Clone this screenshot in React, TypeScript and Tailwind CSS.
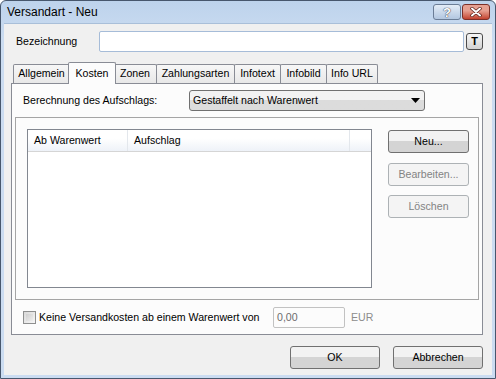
import React from 'react';

const font = "font-['Liberation_Sans',Arial,sans-serif]";

const btn =
  'flex items-center justify-center rounded-[3px] border border-[#707070] bg-gradient-to-b from-[#f2f2f2] from-50% to-[#d4d4d4] to-50% text-black';
const btnDisabled =
  'flex items-center justify-center rounded-[3px] border border-[#adb2b5] bg-[#f4f4f4] text-[#838383]';

const tabs = [
  { label: 'Allgemein', w: 'w-[57px]' },
  { label: 'Kosten', w: 'w-[48px]', active: true },
  { label: 'Zonen', w: 'w-[44px]' },
  { label: 'Zahlungsarten', w: 'w-[79px]' },
  { label: 'Infotext', w: 'w-[47px]' },
  { label: 'Infobild', w: 'w-[47px]' },
  { label: 'Info URL', w: 'w-[52px]' },
];

const TitleButtons = () => (
  <div className="flex items-start gap-[1px] pt-[3px] pr-[5px]">
    <div className="flex h-[16px] w-[28px] items-center justify-center rounded-[3px] border border-[#6b7d96] bg-gradient-to-b from-[#e4edf7] to-[#b3c7e0]">
      <span className="text-[13px] font-bold leading-none text-white [text-shadow:0_0_1px_#334,0_0_1px_#334]">?</span>
    </div>
    <div className="flex h-[16px] w-[28px] items-center justify-center rounded-[3px] border border-[#7b3028] bg-gradient-to-b from-[#e6a091] from-40% to-[#c2422f]">
      <svg width="12" height="10" viewBox="0 0 12 10">
        <path d="M2 1.5 L10 8.5 M10 1.5 L2 8.5" stroke="#5a1c14" strokeWidth="3.4" strokeLinecap="round" />
        <path d="M2 1.5 L10 8.5 M10 1.5 L2 8.5" stroke="#ffffff" strokeWidth="2" strokeLinecap="round" />
      </svg>
    </div>
  </div>
);

export default function App() {
  return (
    <div className={`${font} h-[379px] w-[496px] bg-white text-[10.6px] text-black`}>
      <div className="flex h-[379px] w-[496px] flex-col rounded-t-[6px] border border-[#47576d] bg-gradient-to-b from-[#bdd3ec] from-0% to-[#cbdcf1] to-10%">
        {/* title bar */}
        <div className="flex h-[22px] items-start justify-between">
          <span className="pl-[6px] pt-[4px] text-[12px] leading-[14px] text-black">Versandart - Neu</span>
          <TitleButtons />
        </div>

        {/* client */}
        <div className="mx-[3px] flex h-[352px] flex-col border-t border-[#a9bfd9] bg-[#f0f0f0]">
          <div className="mt-[7px] flex h-[21px] items-center">
            <span className="w-[95px] pl-[12px]">Bezeichnung</span>
            <div className="h-[21px] w-[365px] rounded-[2px] border border-[#a6bcd8] bg-white" />
            <div className="ml-[2px] flex h-[17px] w-[17px] items-center justify-center rounded-[3px] border border-[#4b4b4b] bg-gradient-to-b from-[#f6f6f6] to-[#d2d2d2] text-[11px] font-bold">
              T
            </div>
          </div>

          {/* tabs */}
          <div className="ml-[9px] mt-[10px] flex h-[21px] items-end">
            {tabs.map(t =>
              t.active ? (
                <div
                  key={t.label}
                  className={`${t.w} relative z-10 -mx-[2px] -mb-[1px] flex h-[22px] items-start justify-center rounded-t-[2px] border border-b-0 border-[#898c95] bg-[#fcfcfc] pt-[3px]`}
                >
                  {t.label}
                </div>
              ) : (
                <div
                  key={t.label}
                  className={`${t.w} -ml-[1px] flex h-[19px] items-center justify-center rounded-t-[2px] border border-b-0 border-[#898c95] bg-gradient-to-b from-[#f7f7f7] to-[#e8e8e8] first:ml-0`}
                >
                  {t.label}
                </div>
              )
            )}
          </div>

          {/* panel */}
          <div className="ml-[7px] flex h-[252px] w-[472px] flex-col border border-[#898c95] bg-[#fcfcfc]">
            <div className="mt-[6px] flex h-[21px] items-center">
              <span className="w-[177px] pl-[11px]">Berechnung des Aufschlags:</span>
              <div className="flex h-[21px] w-[236px] items-center justify-between rounded-[3px] border border-[#707070] bg-gradient-to-b from-[#f2f2f2] from-50% to-[#dcdcdc] to-50% pl-[3px] pr-[4px]">
                <span>Gestaffelt nach Warenwert</span>
                <svg width="9" height="5" viewBox="0 0 9 5">
                  <path d="M0 0 H9 L4.5 5 Z" fill="#000" />
                </svg>
              </div>
            </div>

            {/* group frame */}
            <div className="ml-[3px] mt-[6px] flex h-[183px] w-[464px] items-start border border-[#a5a5a5]">
              <div className="ml-[11px] mt-[11px] flex h-[159px] w-[345px] flex-col border border-[#828790] bg-white">
                <div className="flex h-[22px] border-b border-[#d5d5d5] bg-gradient-to-b from-white from-40% to-[#eef2f8]">
                  <div className="flex w-[100px] items-center border-r border-[#e3e7ec] pl-[6px]">Ab Warenwert</div>
                  <div className="flex w-[222px] items-center border-r border-[#e3e7ec] pl-[6px]">Aufschlag</div>
                  <div className="flex-1" />
                </div>
              </div>
              <div className="ml-[16px] mt-[12px] flex flex-col">
                <div className={`${btn} h-[23px] w-[81px] border-[#3c3c3c]`}>Neu...</div>
                <div className={`${btnDisabled} mt-[10px] h-[23px] w-[81px]`}>Bearbeiten...</div>
                <div className={`${btnDisabled} mt-[9px] h-[23px] w-[81px]`}>Löschen</div>
              </div>
            </div>

            <div className="mt-[7px] flex h-[21px] items-center">
              <div className="ml-[11px] h-[13px] w-[13px] border border-[#8e8f8f] bg-gradient-to-br from-[#d8d8d8] to-[#f7f7f7] p-[2px]">
                <div className="h-full w-full bg-gradient-to-br from-[#cfcfcf] to-[#eeeeee]" />
              </div>
              <span className="ml-[3px] w-[234px]">Keine Versandkosten ab einem Warenwert von</span>
              <div className="flex h-[21px] w-[72px] items-center rounded-[2px] border border-[#c2c2c2] bg-[#fcfcfc] pl-[3px] text-[#6d6d6d]">
                0,00
              </div>
              <span className="ml-[6px] text-[#8c8c8c]">EUR</span>
            </div>
          </div>

          <div className="mt-[11px] flex justify-end gap-[13px] pr-[9px]">
            <div className={`${btn} h-[23px] w-[90px]`}>OK</div>
            <div className={`${btn} h-[23px] w-[90px]`}>Abbrechen</div>
          </div>
        </div>
      </div>
    </div>
  );
}
